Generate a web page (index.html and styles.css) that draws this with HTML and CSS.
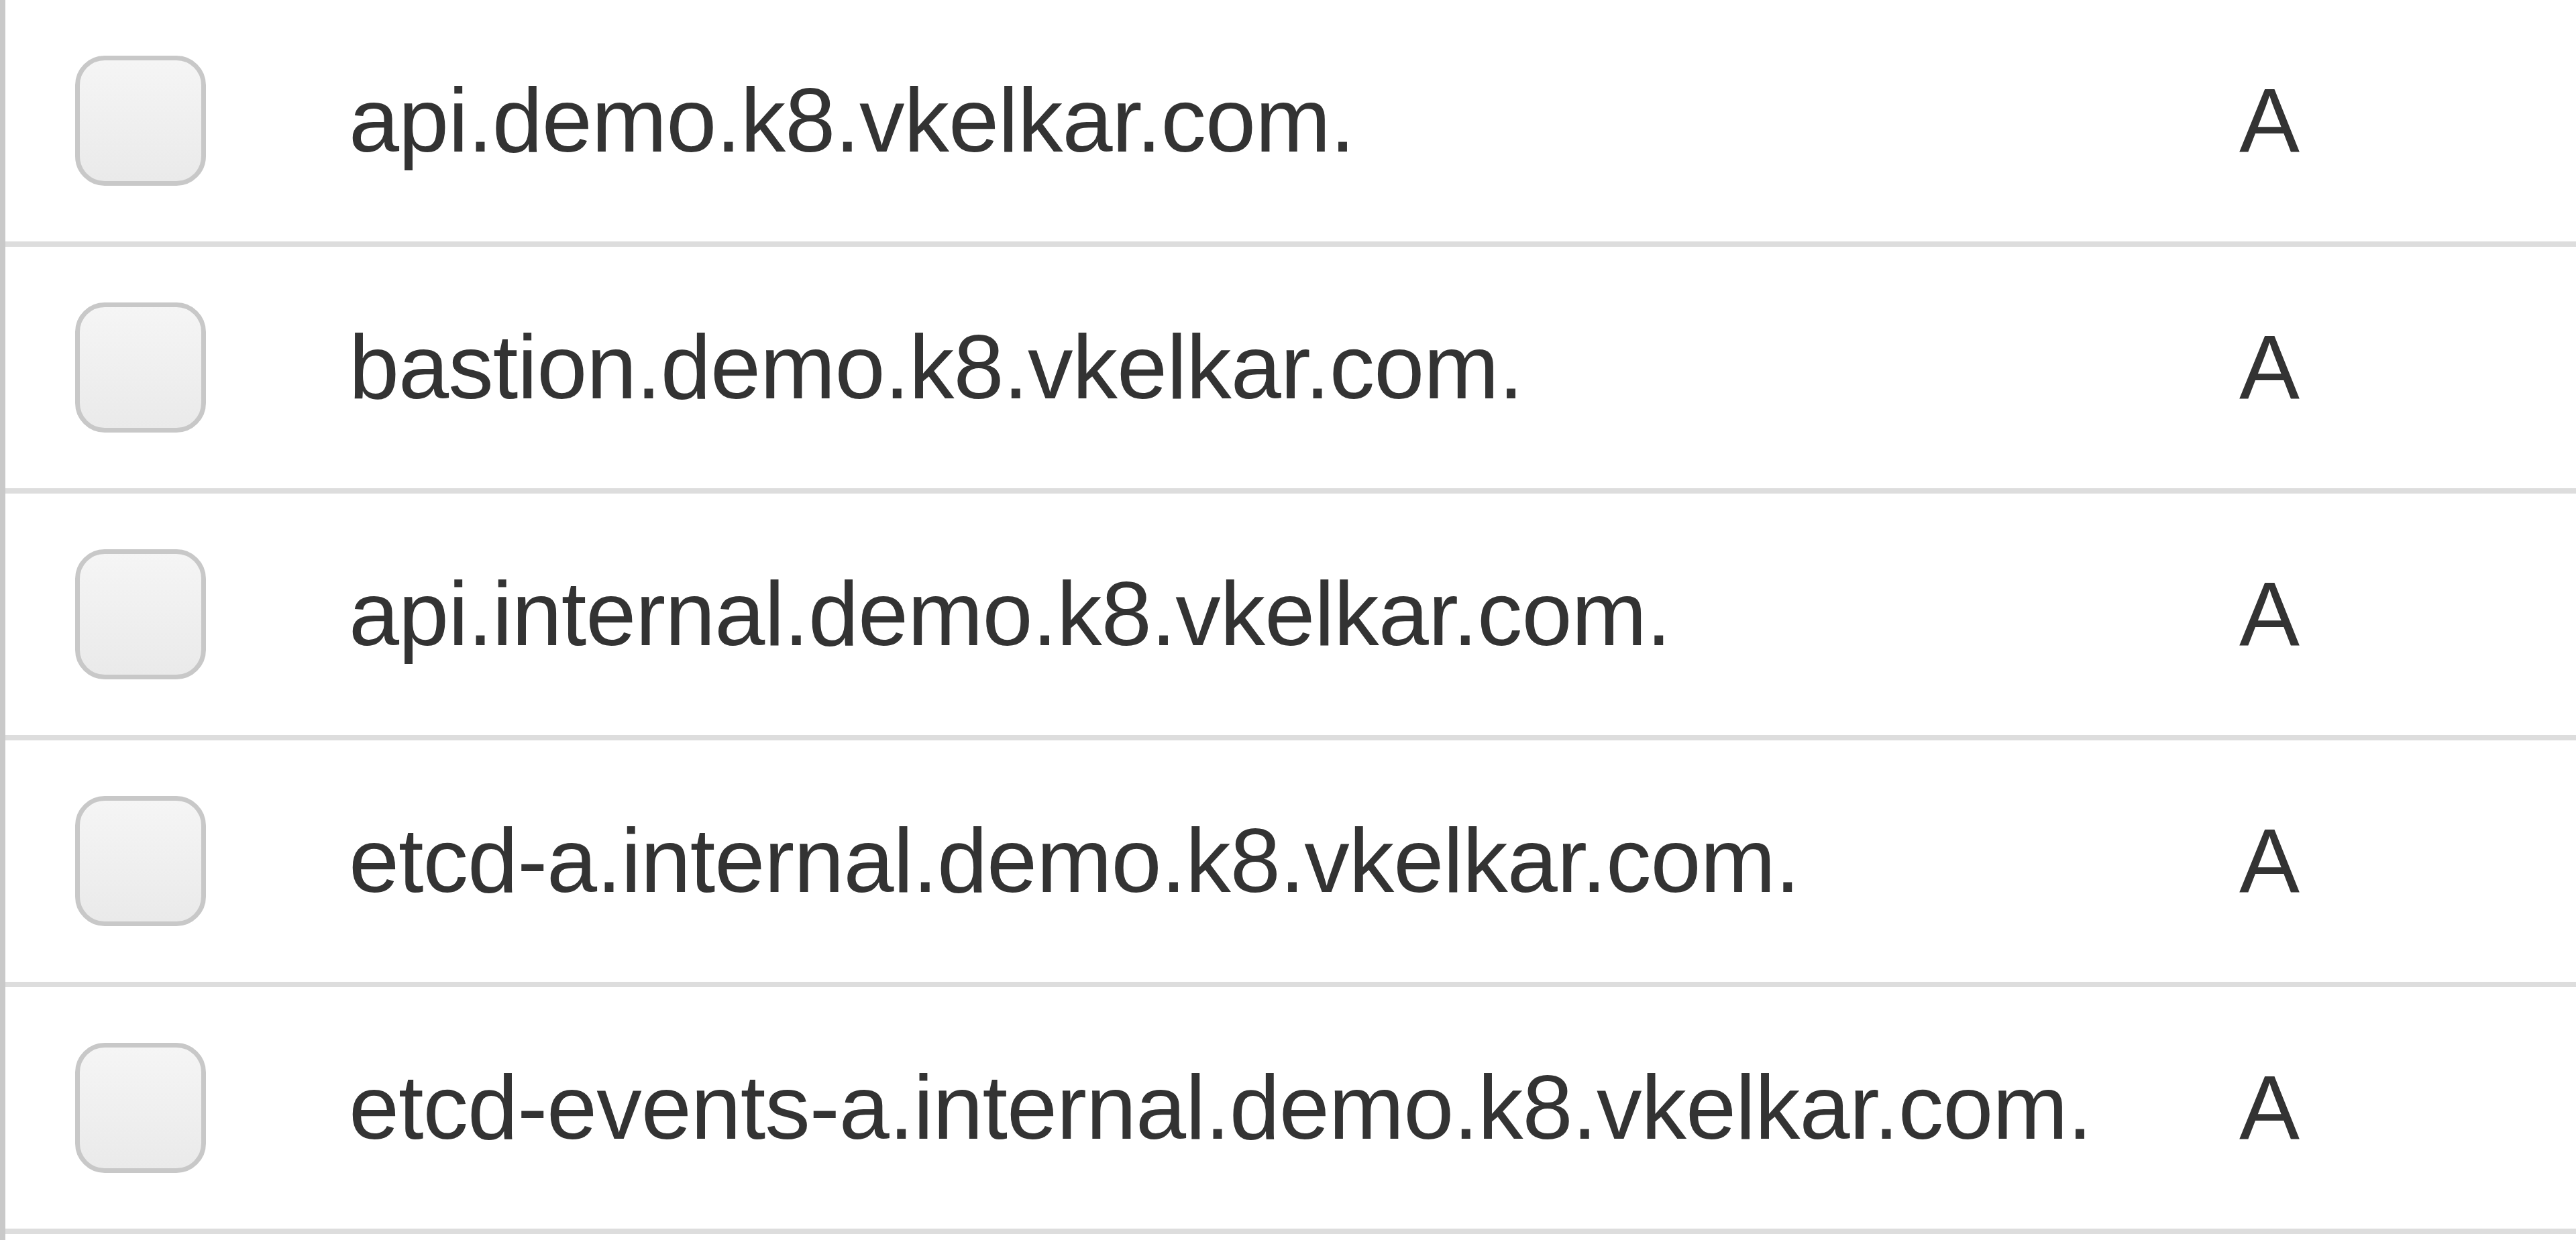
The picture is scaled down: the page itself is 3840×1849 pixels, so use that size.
FILE: index.html
```html
<!DOCTYPE html>
<html>
<head>
<meta charset="utf-8">
<link rel="stylesheet" href="styles.css">
</head>
<body>
<div class="record-table">
  <div class="record-row">
    <div class="cell cell-check"><span class="checkbox"></span></div>
    <div class="cell cell-name">api.demo.k8.vkelkar.com.</div>
    <div class="cell cell-type">A</div>
  </div>
  <div class="record-row">
    <div class="cell cell-check"><span class="checkbox"></span></div>
    <div class="cell cell-name">bastion.demo.k8.vkelkar.com.</div>
    <div class="cell cell-type">A</div>
  </div>
  <div class="record-row">
    <div class="cell cell-check"><span class="checkbox"></span></div>
    <div class="cell cell-name">api.internal.demo.k8.vkelkar.com.</div>
    <div class="cell cell-type">A</div>
  </div>
  <div class="record-row">
    <div class="cell cell-check"><span class="checkbox"></span></div>
    <div class="cell cell-name">etcd-a.internal.demo.k8.vkelkar.com.</div>
    <div class="cell cell-type">A</div>
  </div>
  <div class="record-row">
    <div class="cell cell-check"><span class="checkbox"></span></div>
    <div class="cell cell-name">etcd-events-a.internal.demo.k8.vkelkar.com.</div>
    <div class="cell cell-type">A</div>
  </div>
</div>
</body>
</html>
```

FILE: styles.css
```css
html, body {
  margin: 0;
  padding: 0;
  background: #ffffff;
}

body {
  font-family: "Liberation Sans", Arial, Helvetica, sans-serif;
  color: #333333;
  overflow: hidden;
}

.record-table {
  border-left: 8px solid #c9c9c9;
  min-height: 1849px;
}

.record-row {
  display: grid;
  grid-template-columns: 512px 2818px 1fr;
  height: 360px;
  border-bottom: 8px solid #dddddd;
  align-items: center;
}

.cell {
  font-size: 135px;
  line-height: 1;
  white-space: nowrap;
}

.cell-check {
  padding-left: 104px;
  display: flex;
  align-items: center;
}

.checkbox {
  display: block;
  box-sizing: border-box;
  width: 195px;
  height: 194px;
  border: 7px solid #c8c8c8;
  border-radius: 44px;
  background: linear-gradient(to bottom, #f5f5f5, #eaeaea);
}

.cell-name {
  letter-spacing: -1px;
  padding-bottom: 2px;
}

.cell-type {
  padding-bottom: 2px;
}
```
